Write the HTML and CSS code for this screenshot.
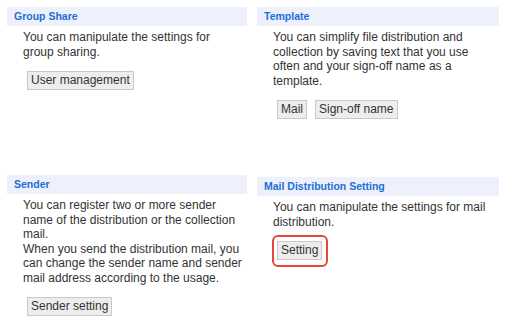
FILE: index.html
```html
<!DOCTYPE html>
<html lang="en">
<head>
    <meta charset="UTF-8">
    <title>Settings</title>
    <link rel="stylesheet" href="styles.css">
</head>
<body>
<div class="settings">
    <div class="panel">
        <h2 class="panel-title">Group Share</h2>
        <p class="panel-text">You can manipulate the settings for group sharing.</p>
        <div class="actions">
            <button class="btn">User management</button>
        </div>
    </div>
    <div class="panel">
        <h2 class="panel-title">Template</h2>
        <p class="panel-text">You can simplify file distribution and collection by saving text that you use often and your sign-off name as a template.</p>
        <div class="actions">
            <button class="btn">Mail</button>
            <button class="btn">Sign-off name</button>
        </div>
    </div>
    <div class="panel">
        <h2 class="panel-title">Sender</h2>
        <p class="panel-text panel-text-wide">You can register two or more sender name of the distribution or the collection mail.<br>When you send the distribution mail, you can change the sender name and sender mail address according to the usage.</p>
        <div class="actions">
            <button class="btn">Sender setting</button>
        </div>
    </div>
    <div class="panel panel-shift">
        <h2 class="panel-title">Mail Distribution Setting</h2>
        <p class="panel-text">You can manipulate the settings for mail distribution.</p>
        <div class="actions">
            <span class="highlight"><button class="btn">Setting</button></span>
        </div>
    </div>
</div>
</body>
</html>
```
FILE: styles.css
```css
*{
    margin: 0;
    padding: 0;
    box-sizing: border-box;
}
body{
    font-family: "Liberation Sans", Arial, sans-serif;
    font-size: 12px;
    color: #333;
    background: #fff;
}
.settings{
    display: grid;
    grid-template-columns: 240px 242px;
    grid-template-rows: 168px auto;
    column-gap: 10px;
    padding: 7px 11px 0 7px;
}
.panel-shift{
    margin-top: 2px;
}
.panel-title{
    height: 19px;
    line-height: 19px;
    padding-left: 7px;
    background: #eef0fc;
    color: #1d6fd6;
    font-size: 10.5px;
    font-weight: bold;
}
.panel-text{
    margin: 4px 8px 0 16px;
    line-height: 14.5px;
}
.panel-text-wide{
    margin-right: 2px;
}
.actions{
    display: flex;
    gap: 8px;
    margin: 12px 0 0 20px;
}
.btn{
    font-family: "Liberation Sans", Arial, sans-serif;
    font-size: 12px;
    line-height: 15px;
    color: #333;
    background: #ededed;
    border: 1px solid #c9c9c9;
    padding: 1px 3px;
    cursor: pointer;
}
.highlight{
    position: relative;
    display: inline-block;
}
.highlight::after{
    content: "";
    position: absolute;
    top: -6px;
    left: -5px;
    right: -6px;
    bottom: -7px;
    border: 2px solid #e8463a;
    border-radius: 6px;
}
```
